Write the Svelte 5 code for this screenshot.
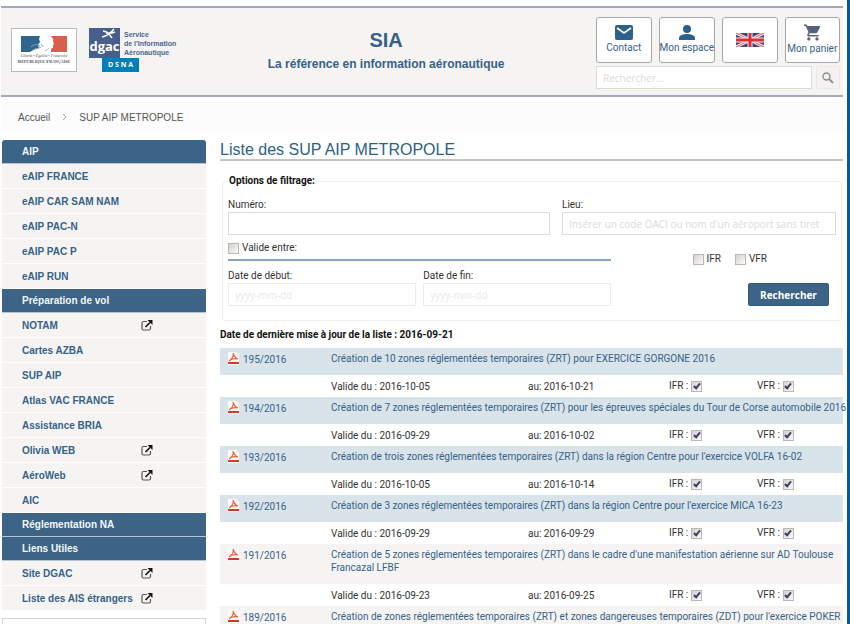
<script lang="ts">
  type MenuItem = { label: string; heading?: boolean; external?: boolean };
  type Sup = { num: string; title: string; from: string; to: string; active: boolean };

  const menu: MenuItem[] = [
    { label: 'AIP', heading: true },
    { label: 'eAIP FRANCE' },
    { label: 'eAIP CAR SAM NAM' },
    { label: 'eAIP PAC-N' },
    { label: 'eAIP PAC P' },
    { label: 'eAIP RUN' },
    { label: 'Préparation de vol', heading: true },
    { label: 'NOTAM', external: true },
    { label: 'Cartes AZBA' },
    { label: 'SUP AIP' },
    { label: 'Atlas VAC FRANCE' },
    { label: 'Assistance BRIA' },
    { label: 'Olivia WEB', external: true },
    { label: 'AéroWeb', external: true },
    { label: 'AIC' },
    { label: 'Réglementation NA', heading: true },
    { label: 'Liens Utiles', heading: true },
    { label: 'Site DGAC', external: true },
    { label: 'Liste des AIS étrangers', external: true },
  ];

  const sups: Sup[] = [
    { num: '195/2016', title: 'Création de 10 zones réglementées temporaires (ZRT) pour EXERCICE GORGONE 2016', from: '2016-10-05', to: '2016-10-21', active: true },
    { num: '194/2016', title: 'Création de 7 zones réglementées temporaires (ZRT) pour les épreuves spéciales du Tour de Corse automobile 2016', from: '2016-09-29', to: '2016-10-02', active: true },
    { num: '193/2016', title: "Création de trois zones réglementées temporaires (ZRT) dans la région Centre pour l'exercice VOLFA 16-02", from: '2016-10-05', to: '2016-10-14', active: true },
    { num: '192/2016', title: "Création de 3 zones réglementées temporaires (ZRT) dans la région Centre pour l'exercice MICA 16-23", from: '2016-09-29', to: '2016-09-29', active: true },
    { num: '191/2016', title: "Création de 5 zones réglementées temporaires (ZRT) dans le cadre d'une manifestation aérienne sur AD Toulouse\nFrancazal LFBF", from: '2016-09-23', to: '2016-09-25', active: false },
    { num: '189/2016', title: "Création de zones réglementées temporaires (ZRT) et zones dangereuses temporaires (ZDT) pour l'exercice POKER", from: '', to: '', active: false },
  ];

  let search = $state('');
  let numero = $state('');
  let lieu = $state('');
  let validBetween = $state(false);
  let startDate = $state('');
  let endDate = $state('');
  let ifr = $state(false);
  let vfr = $state(false);
</script>

<div class="page">
  <header class="header">
    <div class="logos">
      <a class="rf" href="#rf" aria-label="République Française">
        <svg class="rf-flag" viewBox="0 0 46 17" aria-hidden="true">
          <rect width="20" height="16" fill="#2f6690" />
          <rect x="30" width="16" height="16" fill="#d8604c" />
          <path d="M19 0h11c1 2 3 3 2 5l1 3-1 1 0 3-4 1 0 3H9l5-3 4-1-1-3 2-3-1-3z" fill="#fff" />
          <path d="M10 11c3-3 6-3 9-1M12 14c3-2 5-1 8-3M20 8l2 3" stroke="#8ba2b5" fill="none" />
          <path d="M24 15c2-2 3-1 4-3" stroke="#aaa" fill="none" />
        </svg>
        <span class="rf-motto">Liberté • Égalité • Fraternité</span>
        <span class="rf-name">République Française</span>
      </a>
      <a class="dgac" href="#dgac">
        <span class="dgac-square">
          <svg viewBox="0 0 14 11" aria-hidden="true">
            <path d="M0 9c5-1 8-3 12-8M1 3c3 0 4 1 6 3l3 4M4 5l6 0 3-1" stroke="#fff" stroke-width="1.5" fill="none" />
          </svg>
          <span>dgac</span>
        </span>
        <span class="dgac-service">Service<br />de l'Information<br />Aéronautique</span>
        <span class="dsna">D S N A</span>
      </a>
    </div>

    <div class="brand">
      <p class="brand-name">SIA</p>
      <p class="brand-line">La référence en information aéronautique</p>
    </div>

    <div class="tools">
      <nav class="tiles" aria-label="Accès rapide">
        <a class="tile" href="#contact">
          <svg width="18" height="15" viewBox="0 0 18 15" aria-hidden="true">
            <rect width="18" height="15" rx="2" fill="#2d5f8a" />
            <path d="M2 3l7 5 7-5" stroke="#fff" stroke-width="1.6" fill="none" />
          </svg>
          Contact
        </a>
        <a class="tile" href="#espace">
          <svg width="16" height="15" viewBox="0 0 16 15" aria-hidden="true">
            <circle cx="8" cy="4" r="4" fill="#2d5f8a" />
            <path d="M0 15v-2c0-3 5-4 8-4s8 1 8 4v2z" fill="#2d5f8a" />
          </svg>
          Mon espace
        </a>
        <a class="tile" href="#en" aria-label="English">
          <svg width="28" height="14" viewBox="0 0 28 14" aria-hidden="true">
            <rect width="28" height="14" fill="#40447c" />
            <path d="M0 0l28 14M28 0L0 14" stroke="#f1e9ea" stroke-width="3" />
            <path d="M0 0l28 14M28 0L0 14" stroke="#d8595c" />
            <path d="M14 0v14M0 7h28" stroke="#f6eeee" stroke-width="5" />
            <path d="M14 0v14M0 7h28" stroke="#d92f34" stroke-width="3" />
          </svg>
        </a>
        <a class="tile" href="#panier">
          <svg width="17" height="17" viewBox="1 2 21 20" aria-hidden="true">
            <path d="M7 18c-1.100 0-1.990.9-1.990 2S5.900 22 7 22s2-.9 2-2-.9-2-2-2zM1 2v2h2l3.600 7.590-1.350 2.450c-.16.280-.25.610-.25.960 0 1.100.9 2 2 2h12v-2H7.420c-.14 0-.25-.11-.25-.25l.03-.12.900-1.630h7.450c.75 0 1.410-.41 1.750-1.030l3.580-6.490A1 1 0 0020 4H5.210l-.94-2H1zm16 16c-1.100 0-1.990.9-1.990 2s.89 2 1.990 2 2-.9 2-2-.9-2-2-2z" fill="#55627a" />
          </svg>
          Mon panier
        </a>
      </nav>
      <form class="search" role="search">
        <input type="text" aria-label="Rechercher" placeholder="Rechercher..." bind:value={search} />
        <button type="button" aria-label="Lancer la recherche">
          <svg width="12" height="12" viewBox="0 0 12 12" aria-hidden="true">
            <circle cx="4.500" cy="4.500" r="3.500" stroke="#8f8f8f" stroke-width="1.400" fill="none" />
            <path d="M7 7l4 4" stroke="#8f8f8f" stroke-width="1.800" />
          </svg>
        </button>
      </form>
    </div>
  </header>

  <nav class="breadcrumb" aria-label="Fil d'Ariane">
    <a href="#accueil">Accueil</a>
    <svg width="5" height="8" viewBox="0 0 5 8" aria-hidden="true">
      <path d="M1 1l3 3-3 3" stroke="#aaa" fill="none" />
    </svg>
    <span>SUP AIP METROPOLE</span>
  </nav>

  <div class="columns">
    <aside>
      <ul class="menu">
        {#each menu as item}
          <li class:heading={item.heading}>
            <a href="#menu">
              <span>{item.label}</span>
              {#if item.external}
                <svg width="12" height="11" viewBox="0 0 12 11" aria-hidden="true">
                  <path d="M6 1.500H2.500Q1 1.500 1 3v5.500Q1 10 2.500 10H8q1.500 0 1.500-1.500V6" stroke="#555" stroke-width="1.200" fill="none" />
                  <path d="M4.500 7L9 2.500" stroke="#111" stroke-width="1.600" />
                  <path d="M6.500 0H11.500V5z" fill="#111" />
                </svg>
              {/if}
            </a>
          </li>
        {/each}
      </ul>
      <div class="side-box"></div>
    </aside>

    <main>
      <h1>Liste des SUP AIP METROPOLE</h1>

      <form>
        <fieldset>
          <legend>Options de filtrage:</legend>
          <div class="row">
            <div class="field numero">
              <label for="numero">Numéro:</label>
              <input id="numero" type="text" bind:value={numero} />
            </div>
            <div class="field lieu">
              <label for="lieu">Lieu:</label>
              <input id="lieu" type="text" placeholder="Insérer un code OACI ou nom d'un aéroport sans tiret" bind:value={lieu} />
            </div>
          </div>
          <div class="row filters">
            <div class="validity">
              <label class="check between"><input type="checkbox" bind:checked={validBetween} />Valide entre:</label>
              <div class="dates">
                <div class="field">
                  <label for="debut">Date de début:</label>
                  <input id="debut" type="text" placeholder="yyyy-mm-dd" bind:value={startDate} />
                </div>
                <div class="field">
                  <label for="fin">Date de fin:</label>
                  <input id="fin" type="text" placeholder="yyyy-mm-dd" bind:value={endDate} />
                </div>
              </div>
            </div>
            <div class="actions">
              <div class="rules">
                <label class="check"><input type="checkbox" bind:checked={ifr} />IFR</label>
                <label class="check"><input type="checkbox" bind:checked={vfr} />VFR</label>
              </div>
              <button class="submit" type="button">Rechercher</button>
            </div>
          </div>
        </fieldset>
      </form>

      <p class="updated">Date de dernière mise à jour de la liste : 2016-09-21</p>

      <table>
        <colgroup>
          <col class="col-num" />
          <col />
          <col class="col-to" />
          <col class="col-ifr" />
          <col class="col-vfr" />
        </colgroup>
        <tbody>
          {#each sups as sup}
            <tr class="title" class:active={sup.active}>
              <td>
                <a class="pdf" href="#pdf">
                  <svg width="11" height="13" viewBox="0 0 11 13" aria-hidden="true">
                    <path d="M0 0h8l3 3v10H0z" fill="#fdfbfa" />
                    <path d="M5 1c1 3 2 5 5 6M5 1c1 3-1 6-4 8 2-2 5-3 9-2" stroke="#e2673f" stroke-width="1.200" fill="none" />
                    <path d="M0 10h11v2H0z" fill="#cf3a2b" />
                  </svg>
                  <span>{sup.num}</span>
                </a>
              </td>
              <td colspan="4"><a class="sup-title" href="#sup">{sup.title}</a></td>
            </tr>
            {#if sup.from}
              <tr class="detail">
                <td></td>
                <td>Valide du : {sup.from}</td>
                <td>au: {sup.to}</td>
                <td><label class="check">IFR : <input type="checkbox" checked disabled /></label></td>
                <td><label class="check">VFR : <input type="checkbox" checked disabled /></label></td>
              </tr>
            {/if}
          {/each}
        </tbody>
      </table>
    </main>
  </div>
</div>

<style>
  :global(body) {
    margin: 0;
    background: #fff;
  }

  .page {
    box-sizing: border-box;
    height: 100vh;
    overflow: hidden;
    padding: 6px 4px 0 1px;
    border-right: 3px solid #075a98;
    font-family: "Liberation Sans", Arial, sans-serif;
    font-size: 10px;
    color: #333;
  }

  a {
    color: #366288;
    text-decoration: none;
  }

  p {
    margin: 0;
  }

  /* en-tête */
  .header {
    display: flex;
    height: 87px;
    border-top: 2px solid #a3a9b8;
    border-bottom: 2px solid #a3a9b8;
    background: #f5f4f2;
  }

  .logos {
    display: flex;
    gap: 12px;
    padding: 20px 0 0 10px;
  }

  .rf {
    box-sizing: border-box;
    display: flex;
    flex-direction: column;
    align-items: center;
    width: 66px;
    height: 44px;
    padding-top: 7px;
    border: 1px solid #bbb;
    background: #fff;
    font-family: "Liberation Serif", serif;
    color: #555;
    white-space: nowrap;
  }

  .rf-flag {
    width: 46px;
    height: 17px;
  }

  .rf-motto {
    font-size: 4px;
    font-style: italic;
    line-height: 5px;
  }

  .rf-name {
    font-size: 5px;
    font-weight: bold;
    font-variant: small-caps;
    line-height: 7px;
  }

  .dgac {
    display: grid;
    grid-template-columns: 31px auto;
    grid-template-rows: 30px 14px;
    column-gap: 4px;
    color: #4c6590;
  }

  .dgac-square {
    display: flex;
    flex-direction: column;
    align-items: center;
    background: #475f8c;
    color: #fff;
    font: bold 13px/14px "Open Sans", sans-serif;
  }

  .dgac-square svg {
    width: 14px;
    height: 11px;
    margin-left: 8px;
  }

  .dgac-service {
    padding-top: 2px;
    font-size: 7px;
    font-weight: bold;
    line-height: 9px;
  }

  .dsna {
    grid-column: 1 / 3;
    width: 37px;
    margin-left: 13px;
    background: #0080b8;
    color: #fff;
    font: bold 7px/14px "Open Sans", sans-serif;
    text-align: center;
  }

  .brand {
    flex: 1;
    padding-top: 20px;
    color: #366288;
    font-weight: bold;
    text-align: center;
  }

  .brand-name {
    font-size: 20px;
    line-height: 24px;
  }

  .brand-line {
    font-size: 12px;
    line-height: 24px;
  }

  .tools {
    width: 244px;
    padding: 9px 3px 0 0;
  }

  .tiles {
    display: grid;
    grid-template-columns: repeat(4, 1fr);
    gap: 7px;
  }

  .tile {
    box-sizing: border-box;
    display: flex;
    flex-direction: column;
    align-items: center;
    justify-content: center;
    gap: 1px;
    height: 46px;
    border: 1px solid #aaa6a2;
    border-radius: 3px;
    background: #fff;
    font-family: Roboto, sans-serif;
    line-height: 14px;
    white-space: nowrap;
  }

  .search {
    display: grid;
    grid-template-columns: 1fr 24px;
    gap: 4px;
    margin-top: 3px;
  }

  input[type='text'] {
    box-sizing: border-box;
    width: 100%;
    height: 23px;
    padding: 0 6px;
    border: 1px solid #ddd9d3;
    background: #fff;
    font: 10px "Open Sans", sans-serif;
    color: #333;
  }

  input::placeholder {
    color: #dedad6;
    opacity: 1;
  }

  .search button {
    display: flex;
    align-items: center;
    justify-content: center;
    padding: 0;
    border: 1px solid #eae8e5;
    border-radius: 2px;
    background: #f3f2f0;
  }

  .breadcrumb {
    display: flex;
    align-items: center;
    gap: 12px;
    height: 30px;
    margin-top: 5px;
    padding-left: 17px;
    background: #fcfcfc;
    color: #555;
  }

  .breadcrumb a {
    color: #555;
  }

  .columns {
    display: grid;
    grid-template-columns: 204px minmax(0, 1fr);
    gap: 14px;
    padding: 8px 0 0 1px;
  }

  /* menu */
  .menu {
    margin: 0;
    padding: 0;
    list-style: none;
  }

  .menu li {
    box-sizing: border-box;
    height: 25px;
    border-bottom: 1px solid #fff;
    background: #f5f4f3;
    font-weight: bold;
  }

  .menu li.heading {
    height: 24px;
    border-bottom-color: #b4c3d1;
    background: #3b6486;
  }

  .menu li:first-child {
    border-radius: 3px 3px 0 0;
  }

  .menu a {
    display: flex;
    align-items: center;
    height: 100%;
    padding-left: 20px;
  }

  .menu span {
    width: 119px;
    white-space: nowrap;
  }

  .heading a {
    color: #f4f7fa;
  }

  .side-box {
    height: 80px;
    margin-top: 7px;
    border: 1px solid #d5d5cf;
  }

  /* contenu */
  main {
    font-family: Roboto, Arial, sans-serif;
  }

  h1 {
    margin: 0;
    padding-top: 1px;
    border-bottom: 2px solid #c6c4c2;
    color: #2d5f84;
    font: 16px/18px "Liberation Sans", Arial, sans-serif;
  }

  fieldset {
    min-width: 0;
    margin: 13px 1px 0 2px;
    padding: 10px 5px 14px 5px;
    border: 1px solid #efeeed;
    border-radius: 3px;
  }

  legend {
    padding: 0 1px;
    color: #111;
    font-weight: bold;
    line-height: 14px;
  }

  .row {
    display: flex;
    gap: 12px;
  }

  .field {
    flex: 1;
    min-width: 0;
  }

  .field label {
    display: block;
    line-height: 14px;
  }

  .numero {
    flex: 322;
  }

  .lieu {
    flex: 274;
  }

  .filters {
    margin-top: 6px;
  }

  .validity {
    flex: 388;
  }

  .check {
    display: flex;
    align-items: center;
    gap: 3px;
    line-height: 14px;
  }

  .between {
    padding-bottom: 4px;
    border-bottom: 2px solid #89a5bd;
  }

  .dates {
    display: flex;
    gap: 7px;
    margin-top: 8px;
  }

  .dates input {
    border-color: #eeebe9;
  }

  .dates input::placeholder {
    color: #ebe9e6;
  }

  .actions {
    display: flex;
    flex: 208;
    flex-direction: column;
    justify-content: space-between;
    align-items: flex-end;
    padding: 11px 7px 0 0;
  }

  .rules {
    display: flex;
    gap: 14px;
    margin-right: 62px;
  }

  .submit {
    width: 81px;
    height: 23px;
    padding: 0;
    border: 1px solid #31597b;
    border-radius: 2px;
    background: #3b6486;
    color: #fff;
    font: bold 10px "Open Sans", sans-serif;
  }

  input[type='checkbox'] {
    appearance: none;
    box-sizing: border-box;
    display: inline-grid;
    place-items: center;
    width: 11px;
    height: 11px;
    margin: 0;
    border: 1px solid #bbb7b2;
    background: linear-gradient(135deg, #d5d2cf, #fafafa);
  }

  input[type='checkbox']:checked::after {
    content: '';
    width: 2px;
    height: 5px;
    margin-bottom: 2px;
    border: solid #3c4068;
    border-width: 0 2px 2px 0;
    transform: rotate(40deg);
  }

  .updated {
    margin: 7px 0 6px;
    color: #111;
    font-weight: bold;
    line-height: 14px;
  }

  table {
    width: 100%;
    border-collapse: collapse;
    table-layout: fixed;
  }

  .col-num {
    width: 111px;
  }

  .col-to {
    width: 141px;
  }

  .col-ifr {
    width: 88px;
  }

  .col-vfr {
    width: 86px;
  }

  td {
    padding: 0;
  }

  .title td {
    padding: 4px 0 10px;
    background: #f5f4f2;
    line-height: 13px;
    vertical-align: top;
  }

  .title.active td {
    background: #d9e3ea;
  }

  .sup-title {
    white-space: pre;
  }

  .pdf {
    display: flex;
    align-items: flex-start;
    gap: 4px;
    padding-left: 8px;
  }

  .pdf span {
    padding-top: 3px;
    line-height: 10px;
  }

  .detail td {
    height: 22px;
  }
</style>
